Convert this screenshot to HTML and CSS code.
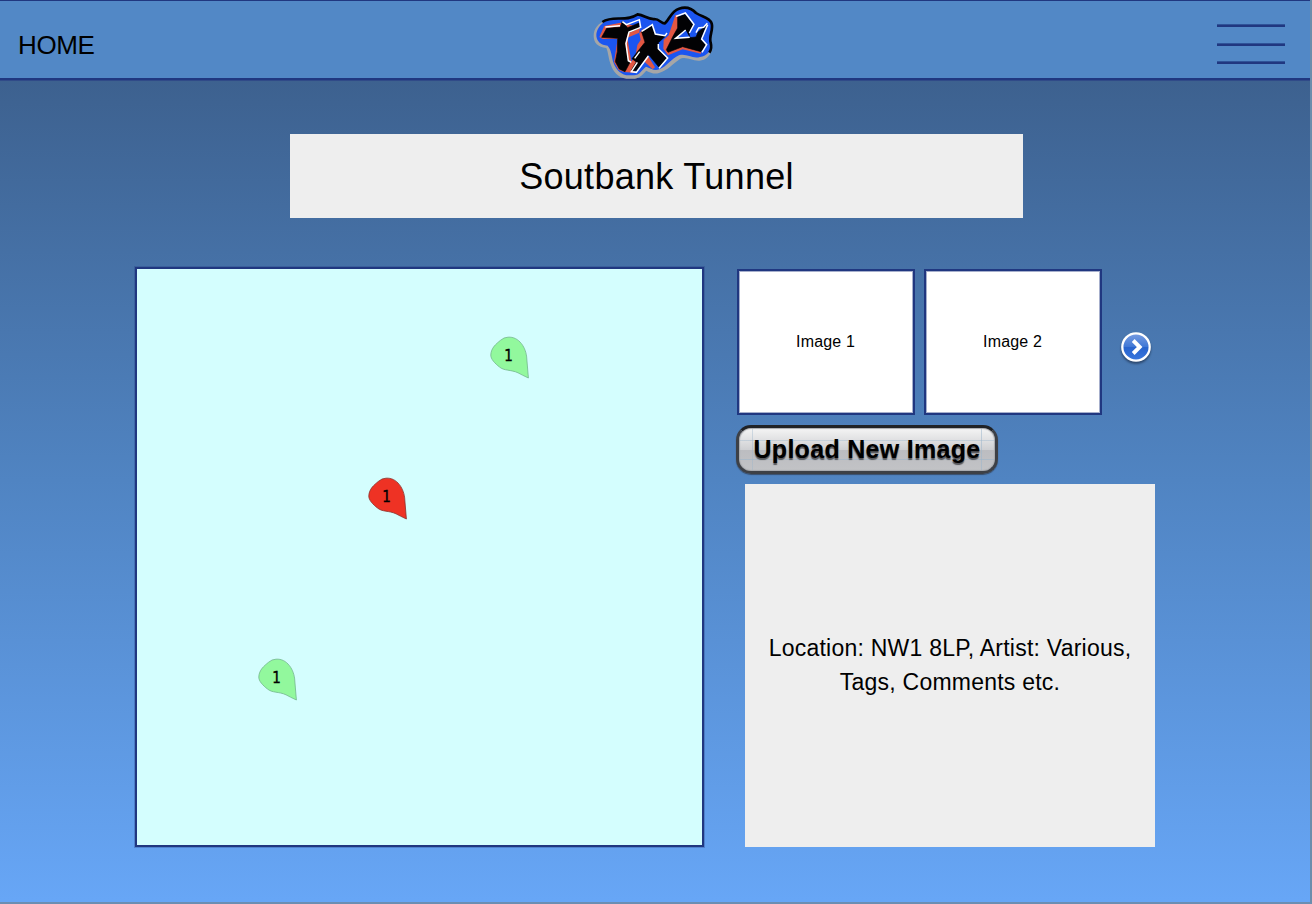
FILE: index.html
```html
<!DOCTYPE html>
<html lang="en">
<head>
<meta charset="utf-8">
<title>Soutbank Tunnel</title>
<link rel="stylesheet" href="styles.css">
</head>
<body>
<div class="page">
  <header class="topbar">
    <a class="home">HOME</a>
    <svg class="logo" viewBox="0 1 420 234" role="img" aria-label="TAG">
      <path d="M62 60C40 66 26 84 26 105C26 126 38 139 64 142C70 155 70 174 78 194C84 212 98 231 124 234L150 234C166 231 176 218 184 210C198 217 208 221 222 217C250 208 262 190 282 177C302 164 320 182 344 180C362 178 374 166 380 150L340 90Z" fill="#a6a6a6"/>
      <path d="M60 62C90 44 130 60 160 42C180 46 190 57 208 55C224 56 231 70 240 68C255 54 258 32 282 24C305 16 321 24 333 37C350 49 371 49 380 68C386 88 371 105 377 126C382 150 366 165 345 169C321 176 305 157 282 164C258 174 246 198 222 206C208 212 196 202 183 198C170 208 164 223 147 224H124C102 218 92 204 86 188C79 168 81 151 68 135C48 134 33 122 34 101C36 84 47 72 60 62Z" fill="#1b55f0"/>
      <path d="M52 64C86 42 120 66 158 41C178 43 188 57 208 55C224 55 231 71 240 68C255 54 258 32 282 24C305 16 321 24 333 37C350 49 373 48 380 68C386 88 371 105 377 126C380 138 379 148 373 156" fill="none" stroke="#020204" stroke-width="8"/>
      <g transform="translate(15 6)">
        <g fill="#e25743">
          <path d="M28 103L43 70L91 60L150 72L148 90L112 105L124 177L137 157L142 127L152 112L148 92L160 78L180 110L140 170L132 210L102 208L86 202L72 178L83 108L38 109Z"/>
          <path d="M154 168L170 154L195 194L188 200ZM256 38L264 36L268 66L244 118L336 131L333 153L278 140L234 158L220 138L221 112L236 98Z"/>
        </g>
        <g fill="#020204" stroke="#020204" stroke-width="2">
          <path d="M35 104L50 77L91 73L97 56L104 64L113 75L147 61L148 76L114 91L105 122L115 174L120 179L105 207L88 199L76 177L82 147L83 107Z"/>
          <path d="M155 88L185 70L195 97L226 101L205 120L204 138L230 167L207 194L176 156L139 204L124 203L139 178L126 168L165 119Z"/>
          <path d="M263 43L285 35L309 66L297 92L300 105L318 103L324 88L348 69L332 110L347 127L333 147L278 132L234 149L229 141L249 101L263 76Z"/>
        </g>
        <path d="M258 106L287 82L300 106Z" fill="#1b55f0"/>
        <g fill="none" stroke="#fff" stroke-width="4.5">
          <path d="M46 73L90 69"/>
          <path d="M97 57L109 66L148 51L152 74L117 88L108 123L115 174L124 179"/>
          <path d="M134 167L149 147M155 86L187 66L196 94L225 99L231 91"/>
          <path d="M205 124L205 138L233 166L207 197M142 179L124 207L139 209L175 160"/>
          <path d="M258 41L286 31L312 65L298 91"/>
          <path d="M287 82L257 107L299 104M318 90L326 76L341 74L352 62"/>
          <path d="M353 66L335 109L350 126L336 149"/>
        </g>
      </g>
    </svg>
    <div class="menu"><span class="menu-line"></span><span class="menu-line"></span><span class="menu-line"></span></div>
  </header>
  <h1 class="title">Soutbank Tunnel</h1>
  <main class="content">
    <section class="map">
      <svg class="pin pin-north" viewBox="0 0 42 46"><path class="pin-shape" d="M2.8 21C3 14 8 10 12.5 6.3Q16 3.2 20 3.2C31 2.2 38.5 14 38.8 25L40.4 44Q34 41 30 38.8C23 35.5 16 37 11.5 33C7 29.5 2.6 25 2.8 21Z"/><text class="pin-label" x="16.3" y="27">1</text></svg>
      <svg class="pin pin-active" viewBox="0 0 42 46"><path class="pin-shape" d="M2.8 21C3 14 8 10 12.5 6.3Q16 3.2 20 3.2C31 2.2 38.5 14 38.8 25L40.4 44Q34 41 30 38.8C23 35.5 16 37 11.5 33C7 29.5 2.6 25 2.8 21Z"/><text class="pin-label" x="16.3" y="27">1</text></svg>
      <svg class="pin pin-south" viewBox="0 0 42 46"><path class="pin-shape" d="M2.8 21C3 14 8 10 12.5 6.3Q16 3.2 20 3.2C31 2.2 38.5 14 38.8 25L40.4 44Q34 41 30 38.8C23 35.5 16 37 11.5 33C7 29.5 2.6 25 2.8 21Z"/><text class="pin-label" x="16.3" y="27">1</text></svg>
    </section>
    <section class="details">
      <div class="gallery">
        <div class="thumb">Image 1</div>
        <div class="thumb">Image 2</div>
        <svg class="next" viewBox="0 0 36 36">
          <defs><linearGradient id="nextFill" x2="0" y2="1"><stop stop-color="#789de2"/><stop offset=".48" stop-color="#4279d6"/><stop offset=".52" stop-color="#2864cd"/><stop offset="1" stop-color="#3977df"/></linearGradient></defs>
          <circle cx="18" cy="17" r="13.7" fill="url(#nextFill)" stroke="#fff" stroke-width="2.3"/>
          <path d="M15.2 10.5L21.7 17L15.2 23.5" fill="none" stroke="#fff" stroke-width="3.9"/>
        </svg>
      </div>
      <button class="upload">Upload New Image</button>
      <div class="notes">Location: NW1 8LP, Artist: Various, Tags, Comments etc.</div>
    </section>
  </main>
</div>
</body>
</html>
```
FILE: styles.css
```css
* { box-sizing: border-box; }
body { margin: 0; font-family: "Liberation Sans", Arial, sans-serif; color: #000; }
.page {
  height: 904px;
  overflow: hidden;
  border-right: 2px solid #6c8dac;
  border-bottom: 2px solid #6b8eb2;
  background: linear-gradient(#3d618f 80px, #5084c2 480px, #67a6f6 900px);
}
.topbar {
  display: grid;
  grid-template-columns: 585px 140px 1fr;
  height: 80px;
  border-top: 1px solid #203780;
  border-bottom: 2px solid #203780;
  background: #5288c6;
  box-shadow: 0 1px #304a88;
}
.home { padding: 29px 0 0 18px; font-size: 26px; line-height: 30px; letter-spacing: -.4px; }
.logo { display: block; width: 140px; height: 78px; }
.menu {
  display: flex;
  flex-direction: column;
  justify-self: end;
  gap: 16px;
  padding: 23px 25px 0 0;
}
.menu-line { width: 68px; height: 3px; border-top: 1px solid #2f5399; background: #203780; }
.menu-line:last-child { margin-top: -1px; }
.title {
  display: flex;
  align-items: center;
  justify-content: center;
  width: 733px;
  height: 84px;
  margin: 54px 0 49px 290px;
  padding-top: 2px;
  background: #eee;
  font-size: 36px;
  font-weight: 400;
  letter-spacing: .3px;
}
.content { display: flex; gap: 33px; padding-left: 135px; }
.map {
  position: relative;
  width: 569px;
  height: 580px;
  border: 2px solid #203780;
  box-shadow: 0 0 0 1px #2037804d;
  background: #d4fefe;
}
.pin { position: absolute; width: 42px; height: 46px; }
.pin-north { left: 351px; top: 65px; }
.pin-active { left: 229px; top: 206px; }
.pin-south { left: 119px; top: 387px; }
.pin-shape { fill: #92f89d; stroke: #72b68c; stroke-width: .8; }
.pin-active .pin-shape { fill: #ee3224; stroke: #8b302a; }
.pin-label { font: 15px "DejaVu Sans Condensed", "DejaVu Sans", sans-serif; font-stretch: condensed; stroke: #000; stroke-width: .4; }
.details { width: 418px; padding-top: 2px; }
.gallery { display: flex; gap: 9px; }
.thumb {
  display: flex;
  align-items: center;
  justify-content: center;
  width: 178px;
  height: 146px;
  padding: 0 1px 0 0;
  border: 2px solid #203780;
  box-shadow: inset 0 0 0 1px #20378066;
  background: #fff;
  font-size: 16px;
  letter-spacing: .15px;
}
.next { width: 36px; height: 36px; margin: 61px 0 0 7px; filter: drop-shadow(0 2px 1px rgba(20, 35, 60, .6)); }
.upload {
  display: block;
  width: 262px;
  height: 49px;
  margin: 10px 0 10px -1px;
  padding: 0 0 1px;
  border: 3px solid #3d4046;
  border-top-color: #202226;
  border-radius: 15px;
  background:
    linear-gradient(90deg, transparent 13px, #9bb5cb66 13px 14px, transparent 14px 242px, #9bb5cb88 242px 243px, transparent 243px),
    linear-gradient(transparent 12px, #9bb5cb66 12px 13px, transparent 13px 31px, #9bb5cb88 31px 32px, transparent 32px),
    linear-gradient(#f5f5f5, #cfd0d3 50%, #bcbdc1 52%, #c2c3c6);
  box-shadow: inset 0 0 1px 1px #a7a9ad, 0 1px 1px #384d6b;
  color: #000;
  font: 700 25px "Liberation Sans", Arial, sans-serif;
  letter-spacing: .3px;
  text-shadow: 0 2px 1px #55565a;
}
.notes {
  display: flex;
  align-items: center;
  width: 410px;
  height: 363px;
  margin-left: 8px;
  padding: 0 20px 2px;
  background: #eee;
  font-size: 23px;
  line-height: 34px;
  letter-spacing: .23px;
  text-align: center;
}
```
